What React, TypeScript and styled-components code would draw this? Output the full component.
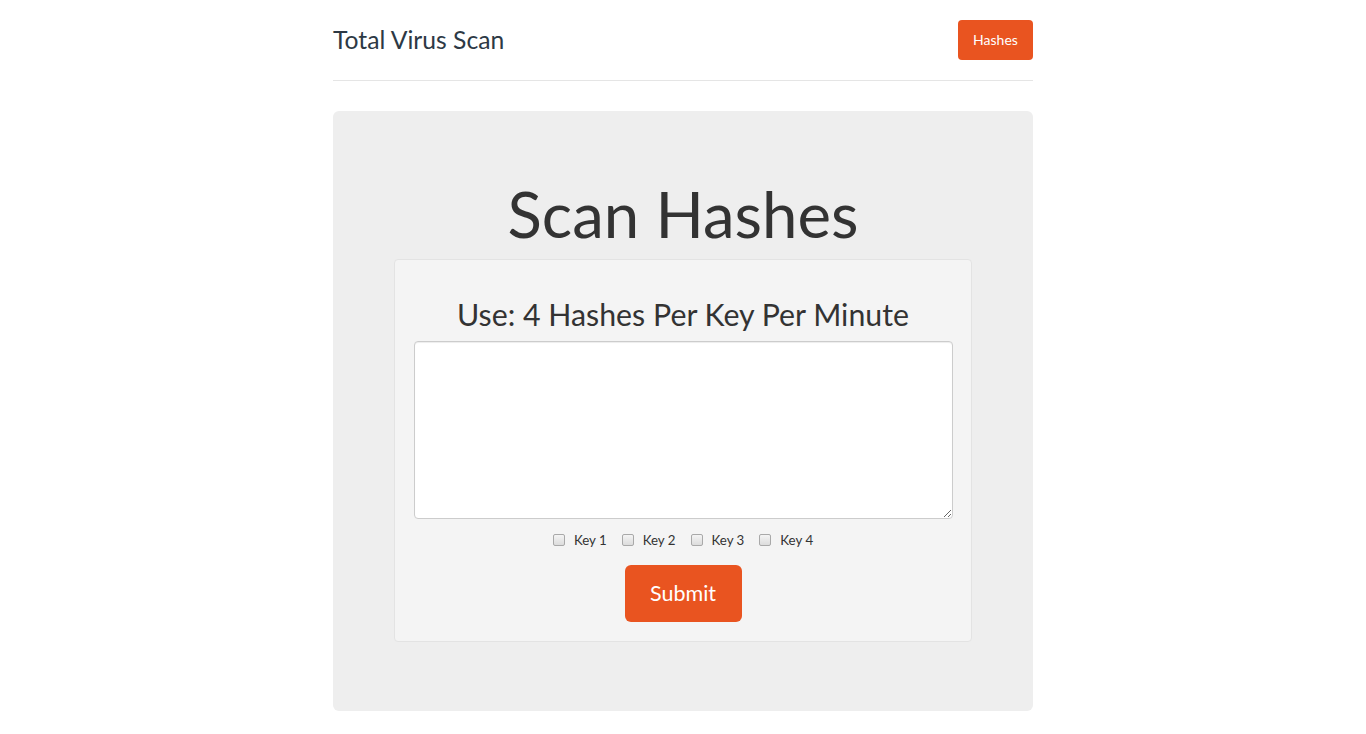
import styled, { createGlobalStyle } from "styled-components";

const GlobalStyle = createGlobalStyle`
    html, body {
        margin: 0;
        padding: 0;
        background: #fff;
    }
    body {
        font-family: Lato, "Open Sans", "Liberation Sans", sans-serif;
        color: #333;
    }
    * {
        box-sizing: border-box;
    }
`

const keys = ["Key 1", "Key 2", "Key 3", "Key 4"]

export default function App() {
    return (
        <>
            <GlobalStyle />
            <Page>
                <Header>
                    <Brand>Total Virus Scan</Brand>
                    <NavButton>Hashes</NavButton>
                </Header>
                <Jumbotron>
                    <Title>Scan Hashes</Title>
                    <Well>
                        <SubTitle>Use: 4 Hashes Per Key Per Minute</SubTitle>
                        <HashInput />
                        <KeyRow>
                            {keys.map((k) => (
                                <KeyLabel key={k}>
                                    <Check type="checkbox" />
                                    {k}
                                </KeyLabel>
                            ))}
                        </KeyRow>
                        <SubmitButton>Submit</SubmitButton>
                    </Well>
                </Jumbotron>
            </Page>
        </>
    )
}

const Page = styled.div`
    width: 700px;
    margin: 0 auto;
    padding-top: 20px;
`
const Header = styled.header`
    display: flex;
    justify-content: space-between;
    align-items: center;
    height: 61px;
    padding-bottom: 20px;
    border-bottom: 1px solid #e5e5e5;
`
const Brand = styled.h3`
    margin: 0;
    font-size: 24.7px;
    font-weight: 400;
    color: #2d3945;
    line-height: 40px;
`
const NavButton = styled.button`
    width: 75px;
    height: 40px;
    border: none;
    border-radius: 4px;
    background: #e95420;
    color: #fff;
    font-family: inherit;
    font-size: 14px;
    padding: 0 0 2px;
`
const Jumbotron = styled.section`
    margin-top: 30px;
    height: 600px;
    padding: 48px 60px;
    background: #eeeeee;
    border-radius: 6px;
    display: flex;
    flex-direction: column;
    align-items: center;
`
const Title = styled.h1`
    margin: 20px 0 11px;
    font-size: 63.5px;
    font-weight: 400;
    line-height: 69px;
    color: #333;
`
const Well = styled.div`
    width: 578px;
    padding: 19px;
    background: #f4f4f4;
    border: 1px solid #e3e3e3;
    border-radius: 4px;
    display: flex;
    flex-direction: column;
    align-items: center;
`
const SubTitle = styled.h3`
    margin: 20px 0 12px;
    font-size: 30.3px;
    font-weight: 400;
    line-height: 30px;
    color: #333;
`
const HashInput = styled.textarea`
    width: 539px;
    height: 178px;
    border: 1px solid #ccc;
    border-radius: 4px;
    background: #fff;
    box-shadow: inset 0 1px 1px rgba(0, 0, 0, 0.075);
    resize: both;
    display: block;
`
const KeyRow = styled.div`
    display: flex;
    justify-content: center;
    gap: 15px;
    margin-top: 11px;
    height: 20px;
    align-items: center;
`
const KeyLabel = styled.label`
    display: flex;
    align-items: center;
    gap: 9px;
    font-size: 13.3px;
    color: #333;
`
const Check = styled.input`
    appearance: none;
    margin: 0;
    width: 12px;
    height: 12px;
    border: 1px solid #a9a9a9;
    border-radius: 2px;
    background: linear-gradient(#f4f4f4, #dcdcdc);
`
const SubmitButton = styled.button`
    margin-top: 15px;
    width: 117px;
    height: 57px;
    border: none;
    border-radius: 6px;
    background: #e95420;
    color: #fff;
    font-family: inherit;
    font-size: 21.5px;
    font-weight: 400;
    padding: 0 0 2px;
`
